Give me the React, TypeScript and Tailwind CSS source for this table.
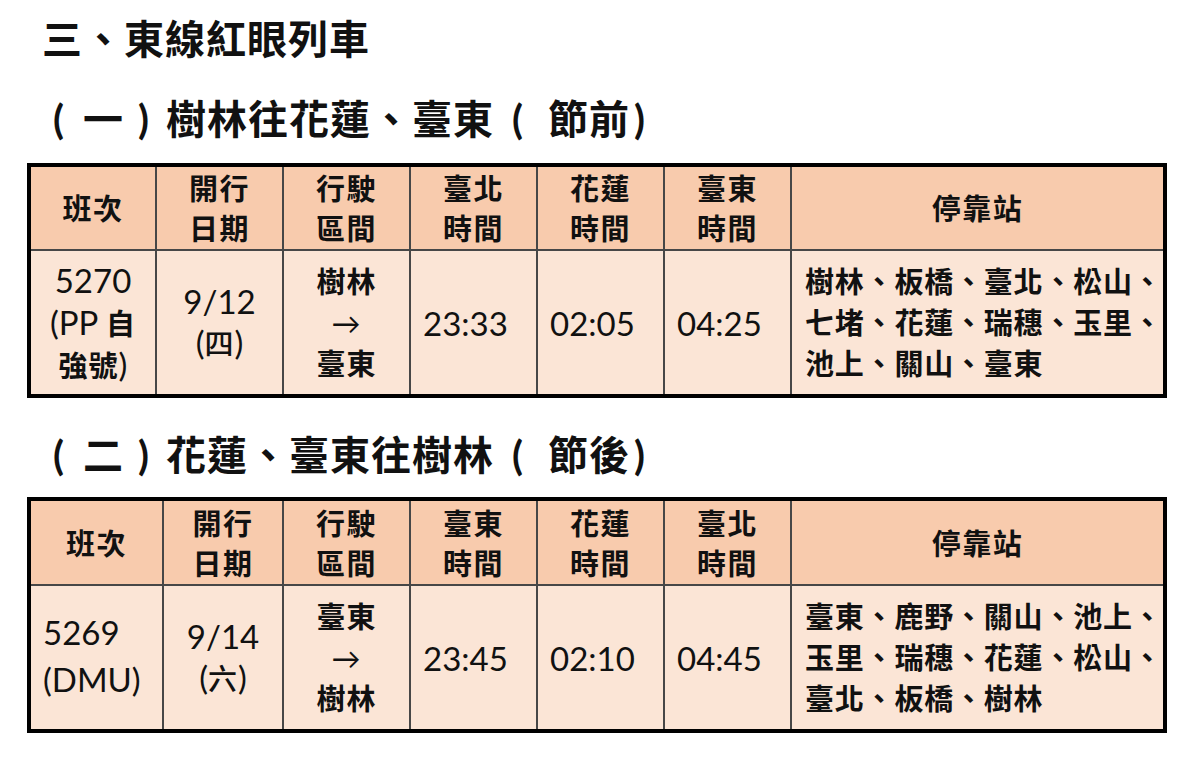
import React from "react";

const L = ({ children }: { children: React.ReactNode }) => (
  <span className="font-normal text-[33px] tracking-normal">{children}</span>
);

function HeadCell({ lines }: { lines: string[] }) {
  return (
    <div className="bg-[#f8cbad] flex flex-col items-center justify-center text-[29px] font-bold leading-[40px] tracking-[1.5px] pt-[2px]">
      {lines.map((l) => (
        <div key={l}>{l}</div>
      ))}
    </div>
  );
}

function BodyCell({ children }: { children: React.ReactNode }) {
  return (
    <div className="bg-[#fbe5d6] flex flex-col items-center justify-center text-center text-[29px] font-bold leading-[41px] tracking-[1px]">
      {children}
    </div>
  );
}

function TimeCell({ t }: { t: string }) {
  return (
    <div className="bg-[#fbe5d6] flex items-center pl-[12px] pt-[2px]">
      <L>{t}</L>
    </div>
  );
}

type Row = {
  train: React.ReactNode;
  date: string;
  wd: string;
  from: string;
  to: string;
  t1: string;
  t2: string;
  t3: string;
  h1: string;
  h3: string;
  stops: string[];
};

function Timetable({ row, cols, rows }: { row: Row; cols: string; rows: string }) {
  return (
    <div className={`ml-[27px] w-[1140px] border-4 border-black bg-[#474747] grid gap-[2px] ${cols} ${rows}`}>
      <HeadCell lines={["班次"]} />
      <HeadCell lines={["開行", "日期"]} />
      <HeadCell lines={["行駛", "區間"]} />
      <HeadCell lines={[row.h1, "時間"]} />
      <HeadCell lines={["花蓮", "時間"]} />
      <HeadCell lines={[row.h3, "時間"]} />
      <HeadCell lines={["停靠站"]} />

      {row.train}
      <BodyCell>
        <div>
          <L>{row.date}</L>
        </div>
        <div className="-mt-[1px]">
          <L>(</L>
          <span className="font-medium">{row.wd}</span>
          <L>)</L>
        </div>
      </BodyCell>
      <BodyCell>
        <div>{row.from}</div>
        <div className="font-normal">→</div>
        <div>{row.to}</div>
      </BodyCell>
      <TimeCell t={row.t1} />
      <TimeCell t={row.t2} />
      <TimeCell t={row.t3} />
      <div className="bg-[#fbe5d6] flex flex-col justify-center pl-[13px] text-[29px] font-bold leading-[41px] tracking-[0.8px] whitespace-nowrap">
        {row.stops.map((s) => (
          <div key={s}>{s}</div>
        ))}
      </div>
    </div>
  );
}

function Heading({ num, main, tail }: { num: string; main: string; tail: string }) {
  return (
    <div className="flex items-center h-[48px] pl-[53px] text-[40px] font-bold whitespace-nowrap">
      <span className="w-[30px] shrink-0">(</span>
      <span className="w-[55px] shrink-0">{num}</span>
      <span className="w-[28px] shrink-0">)</span>
      <span className="tracking-[1px]">{main}</span>
      <span className="ml-[18px] w-[36px] shrink-0">(</span>
      <span className="tracking-[1px]">{tail}</span>
      <span className="ml-[4px]">)</span>
    </div>
  );
}

export default function App() {
  const row1: Row = {
    train: (
      <BodyCell>
        <div>
          <L>5270</L>
        </div>
        <div>
          <L>(PP </L>
          <span>自</span>
        </div>
        <div>
          <span>強號</span>
          <L>)</L>
        </div>
      </BodyCell>
    ),
    date: "9/12",
    wd: "四",
    from: "樹林",
    to: "臺東",
    t1: "23:33",
    t2: "02:05",
    t3: "04:25",
    h1: "臺北",
    h3: "臺東",
    stops: ["樹林、板橋、臺北、松山、", "七堵、花蓮、瑞穗、玉里、", "池上、關山、臺東"],
  };
  const row2: Row = {
    train: (
      <div className="bg-[#fbe5d6] flex flex-col justify-center pl-[12px] leading-[41px] pt-[3px]">
        <div>
          <L>5269</L>
        </div>
        <div>
          <L>(DMU)</L>
        </div>
      </div>
    ),
    date: "9/14",
    wd: "六",
    from: "臺東",
    to: "樹林",
    t1: "23:45",
    t2: "02:10",
    t3: "04:45",
    h1: "臺東",
    h3: "臺北",
    stops: ["臺東、鹿野、關山、池上、", "玉里、瑞穗、花蓮、松山、", "臺北、板橋、樹林"],
  };

  return (
    <div className="w-[1200px] h-[780px] bg-white text-[#111] font-[Lato,'Noto_Sans_CJK_TC',sans-serif] overflow-hidden">
      <div className="pt-[15px] pl-[42px] text-[40px] font-bold leading-[48px] tracking-[1px]">
        三、東線紅眼列車
      </div>
      <div className="mt-[32px]">
        <Heading num="一" main="樹林往花蓮、臺東" tail="節前" />
      </div>
      <div className="mt-[20px]">
        <Timetable
          row={row1}
          cols="grid-cols-[124px_125px_125px_125px_125px_125px_371px]"
          rows="grid-rows-[82px_143px]"
        />
      </div>
      <div className="mt-[33px]">
        <Heading num="二" main="花蓮、臺東往樹林" tail="節後" />
      </div>
      <div className="mt-[18px]">
        <Timetable
          row={row2}
          cols="grid-cols-[131px_118px_125px_125px_125px_125px_371px]"
          rows="grid-rows-[83px_143px]"
        />
      </div>
    </div>
  );
}
